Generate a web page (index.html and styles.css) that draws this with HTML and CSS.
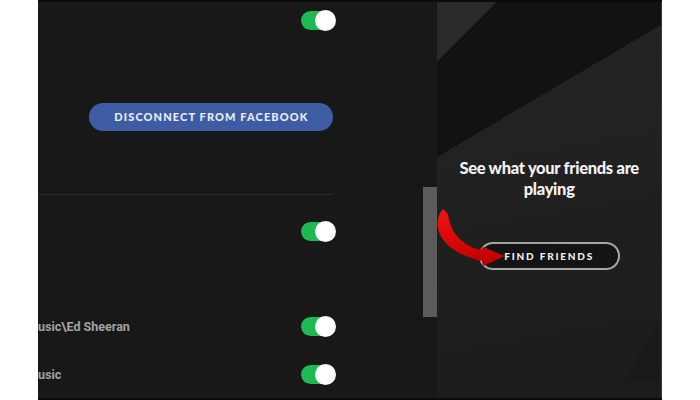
FILE: index.html
```html
<!DOCTYPE html>
<html lang="en">

<head>
    <meta charset="UTF-8">
    <meta name="viewport" content="width=device-width, initial-scale=1.0">
    <title>Settings</title>
    <link rel="stylesheet" href="styles.css">
</head>

<body>
    <div class="app">
        <div class="settings">
            <div class="row r1"><span class="toggle"></span></div>
            <div class="fb-row"><button class="btn-fb">Disconnect from Facebook</button></div>
            <div class="divider"></div>
            <div class="row r3"><span class="toggle"></span></div>
            <div class="row r4"><span class="path">usic\Ed Sheeran</span><span class="toggle"></span></div>
            <div class="row r5"><span class="path">usic</span><span class="toggle"></span></div>
        </div>
        <div class="scroll">
            <div class="thumb"></div>
        </div>
        <div class="friends">
            <h2>See what your friends are playing</h2>
            <button class="btn-find">Find friends</button>
        </div>
        <svg class="arrow" width="80" height="70" viewBox="0 0 80 70">
            <defs>
                <linearGradient id="red" x1="0" y1="0" x2="0.2" y2="1">
                    <stop offset="0" stop-color="#f21414" />
                    <stop offset="1" stop-color="#c20000" />
                </linearGradient>
            </defs>
            <path d="M13 4 C1 18, 7 46, 52 56 L53 61 L75 51 L53 42 L51 45 C37 42, 21 32, 18 9 Z" fill="url(#red)" />
        </svg>
    </div>
</body>

</html>
```

FILE: styles.css
```css
body {
    margin: 0;
    background-color: #ffffff;
    font-family: 'Lato', 'Open Sans', sans-serif;
}

.app {
    position: relative;
    display: flex;
    margin-left: 38px;
    width: 624px;
    height: 396px;
    border-top: 2px solid #0b0b0b;
    border-bottom: 2px solid #0b0b0b;
    background-color: #181818;
}

.settings {
    width: 298px;
    padding-right: 88px;
    overflow: hidden;
    display: flex;
    flex-direction: column;
}

.row {
    display: flex;
    align-items: center;
}

.r1 {
    height: 38px;
}

.r3 {
    height: 74px;
}

.r4 {
    margin-top: 35px;
    height: 48px;
}

.r5 {
    height: 48px;
}

.toggle {
    position: relative;
    margin-left: auto;
    width: 34px;
    height: 19px;
    border-radius: 10px;
    background-color: #1db954;
}

.toggle::after {
    content: "";
    position: absolute;
    right: -1px;
    top: -1px;
    width: 21px;
    height: 21px;
    border-radius: 50%;
    background-color: #ffffff;
}

.path {
    font-size: 12.5px;
    font-weight: 700;
    color: #a3a3a3;
    font-family: 'Roboto', sans-serif;
}

.fb-row {
    display: flex;
    justify-content: flex-end;
    margin-top: 63px;
}

.btn-fb {
    width: 244px;
    height: 28px;
    margin-right: 2px;
    border: none;
    border-radius: 14px;
    background-color: #3d5ca3;
    color: #e8edf6;
    font-family: 'Lato', sans-serif;
    font-size: 11px;
    font-weight: 900;
    letter-spacing: 1.1px;
    text-transform: uppercase;
}

.divider {
    margin-top: 63px;
    width: 295px;
    height: 1px;
    background-color: #2b2b2b;
}

.scroll {
    width: 14px;
    background-color: #181818;
}

.thumb {
    margin-top: 185px;
    height: 130px;
    background-color: #5b5b5b;
}

.friends {
    width: 224px;
    display: flex;
    flex-direction: column;
    align-items: center;
    background:
        linear-gradient(to bottom right, #2a2a2a 50%, transparent 50%) 0 0 / 59px 60px no-repeat,
        linear-gradient(to bottom right, #121212 50%, transparent 50%) 0 23px / 224px 132px no-repeat,
        linear-gradient(#121212, #121212) 0 0 / 224px 24px no-repeat,
        linear-gradient(to bottom right, transparent 50%, #191919 50%) 187px 318px / 35px 62px no-repeat,
        linear-gradient(170deg, #252525, #1f1f1f 60%, #1c1c1c);
    border-right: 1px solid #3a3a3a;
}

.friends h2 {
    margin: 156px 0 0;
    width: 196px;
    text-align: center;
    font-size: 16.5px;
    line-height: 21px;
    font-weight: 900;
    letter-spacing: -0.3px;
    color: #f2f2f2;
}

.btn-find {
    margin-top: 42px;
    width: 141px;
    height: 28px;
    border: 2px solid #a5a5a5;
    border-radius: 14px;
    background-color: #141414;
    color: #f0f0f0;
    font-family: 'Lato', sans-serif;
    font-size: 10px;
    font-weight: 900;
    letter-spacing: 1.8px;
    text-transform: uppercase;
}

.arrow {
    position: absolute;
    left: 392px;
    top: 203px;
}
```
